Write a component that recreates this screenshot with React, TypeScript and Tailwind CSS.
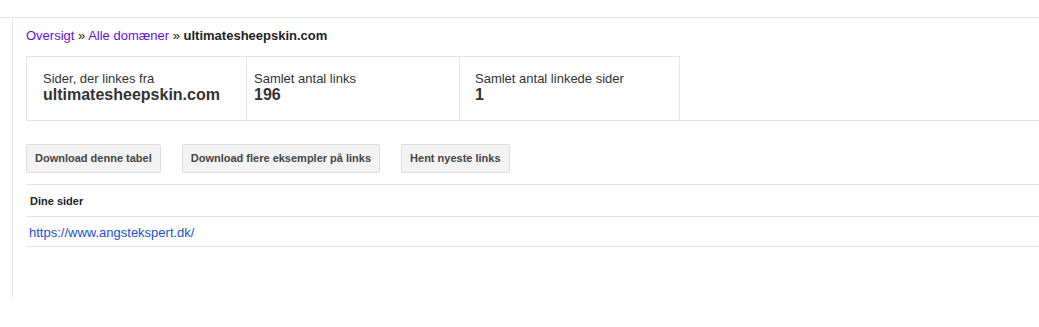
export default function App() {
  const stats = [
    { label: "Sider, der linkes fra", value: "ultimatesheepskin.com", cls: "w-[221px] pl-[16px] border-l" },
    { label: "Samlet antal links", value: "196", cls: "w-[213px] pl-[7px]" },
    { label: "Samlet antal linkede sider", value: "1", cls: "w-[220px] pl-[15px]" },
  ];

  const buttons = ["Download denne tabel", "Download flere eksempler på links", "Hent nyeste links"];

  return (
    <div className="w-[1039px] h-[327px] pt-[17px] bg-white font-['Liberation_Sans',Arial,sans-serif] text-[#222]">
      <div className="border-t border-[#e5e5e5]">
        <div className="ml-[12px] h-[279px] border-l border-[#e5e5e5] pl-[13px]">
          {/* breadcrumb */}
          <div className="pt-[10px] text-[13px] leading-[16px]">
            <span className="text-[#6611cc]">Oversigt</span>
            <span className="text-[#222]"> » </span>
            <span className="text-[#6611cc]">Alle domæner</span>
            <span className="text-[#222]"> » </span>
            <span className="font-bold text-[#222]">ultimatesheepskin.com</span>
          </div>

          {/* stats */}
          <div className="mt-[12px] flex border-b border-[#e5e5e5]">
            {stats.map((s) => (
              <div
                key={s.label}
                className={`h-[64px] border-t border-r border-[#e5e5e5] pt-[14px] ${s.cls}`}
              >
                <div className="text-[13px] leading-[15px] text-[#333]">{s.label}</div>
                <div className="text-[16px] leading-[18px] font-bold text-[#333]">{s.value}</div>
              </div>
            ))}
          </div>

          {/* buttons */}
          <div className="mt-[23px] flex gap-[21px]">
            {buttons.map((b) => (
              <button
                key={b}
                className="h-[29px] px-[8px] rounded-[2px] border border-[#dcdcdc] bg-[#f3f3f3] text-[11px] font-bold text-[#444]"
              >
                {b}
              </button>
            ))}
          </div>

          {/* table */}
          <div className="mt-[11px] border-t border-[#e5e5e5]">
            <div className="h-[32px] border-b border-[#e5e5e5] pl-[4px] pt-[10px] text-[11px] leading-[13px] font-bold text-[#222]">
              Dine sider
            </div>
            <div className="h-[30px] border-b border-[#e5e5e5] pl-[3px] pt-[8px] text-[13px] leading-[16px] text-[#1a52c8]">
              https://www.angstekspert.dk/
            </div>
          </div>
        </div>
      </div>
    </div>
  );
}
